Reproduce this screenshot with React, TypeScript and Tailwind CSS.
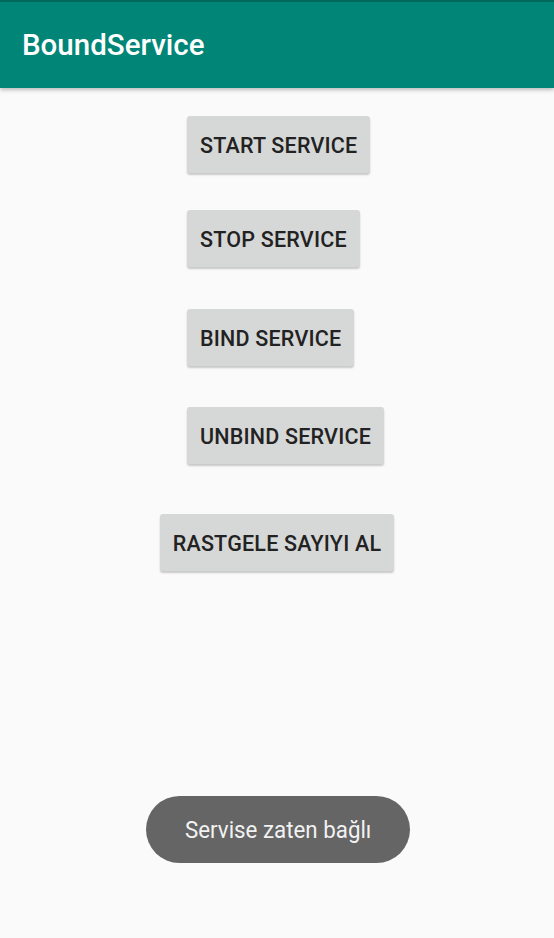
const buttons = [
    { label: 'START SERVICE', mt: 'mt-[28px]', ml: 'ml-[187px]' },
    { label: 'STOP SERVICE', mt: 'mt-[37px]', ml: 'ml-[187px]' },
    { label: 'BIND SERVICE', mt: 'mt-[42px]', ml: 'ml-[187px]' },
    { label: 'UNBIND SERVICE', mt: 'mt-[41px]', ml: 'ml-[187px]' },
    { label: 'RASTGELE SAYIYI AL', mt: 'mt-[50px]', ml: 'self-center' },
];

const App = () => {
    return (
        <div className="relative h-[938px] w-[554px] overflow-hidden bg-[#fafafa]" style={{ fontFamily: 'Roboto, "Noto Sans", sans-serif' }}>
            {/* app bar */}
            <div className="relative z-10 h-[88px] border-t-2 border-[#00695c] bg-[#008577] shadow-[0_2px_4px_rgba(0,0,0,0.25)]">
                <div className="pl-[22px] pt-[25px] text-[29.5px] leading-[36px] font-medium text-white">BoundService</div>
            </div>

            <div className="flex flex-col items-start">
                {buttons.map((b) => (
                    <button
                        key={b.label}
                        className={`${b.mt} ${b.ml} h-[57px] rounded-[3px] bg-[#d6d7d7] px-[13px] pt-[3px] text-[21.5px] font-medium tracking-[0.2px] text-[#222] shadow-[0_2px_2px_rgba(0,0,0,0.2)]`}
                    >
                        {b.label}
                    </button>
                ))}
            </div>

            {/* toast */}
            <div className="absolute left-[146px] top-[796px] flex h-[67px] w-[264px] items-center justify-center rounded-full bg-[#656565] text-[#f2f2f2]">
                <span className="scale-x-[0.93] text-[24px]">Servise zaten bağlı</span>
            </div>
        </div>
    );
};

export default App;
